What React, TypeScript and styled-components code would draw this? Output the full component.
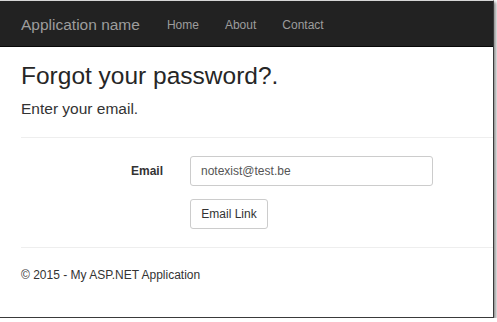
import React from "react";
import styled, { createGlobalStyle } from "styled-components";

const Global = createGlobalStyle`
  html, body { margin: 0; padding: 0; background: #ffffff; }
  body { font-family: "Liberation Sans", Arial, Helvetica, sans-serif; color: #333; }
  * { box-sizing: border-box; }
`;

const Frame = styled.div`
  width: 494px;
  height: 318px;
  background: #fff;
  border-top: 1px solid #d6d6d6;
  border-right: 1px solid #3a3a3a;
  border-bottom: 1px solid #3a3a3a;
  box-shadow: 2px 2px 3px rgba(0, 0, 0, 0.45);
  display: flex;
  flex-direction: column;
  overflow: hidden;
`;

const NavBar = styled.nav`
  height: 46px;
  flex: none;
  background: #222;
  border-bottom: 1px solid #080808;
  display: flex;
  align-items: center;
  padding-left: 21px;
  padding-top: 3px;
`;

const Brand = styled.span`
  font-size: 15.5px;
  color: #9d9d9d;
  margin-right: 27px;
`;

const NavLinks = styled.div`
  display: flex;
  gap: 26px;
`;

const NavLink = styled.span`
  font-size: 12px;
  color: #9d9d9d;
`;

const Container = styled.main`
  padding-left: 21px;
  display: flex;
  flex-direction: column;
`;

const Title = styled.h2`
  margin: 16px 0 0;
  font-size: 24.5px;
  font-weight: 400;
  line-height: 1.1;
  color: #262626;
`;

const SubTitle = styled.h4`
  margin: 10px 0 0;
  font-size: 15.5px;
  font-weight: 400;
  line-height: 1.1;
  color: #333;
`;

const Rule = styled.hr<{ $top: number }>`
  margin: ${(p) => p.$top}px 0 0;
  border: 0;
  border-top: 1px solid #eee;
  height: 0;
`;

const Form = styled.form`
  margin-top: 18px;
  display: grid;
  grid-template-columns: 142px 243px;
  column-gap: 27px;
  row-gap: 13px;
  align-items: center;
`;

const Label = styled.label`
  font-size: 12px;
  font-weight: 700;
  text-align: right;
  color: #333;
`;

const Input = styled.input`
  height: 30px;
  width: 243px;
  padding: 0 10px;
  font-family: inherit;
  font-size: 12px;
  color: #555;
  border: 1px solid #ccc;
  border-radius: 3px;
  background: #fff;
  outline: none;
`;

const Button = styled.button`
  grid-column: 2;
  justify-self: start;
  height: 30px;
  width: 78px;
  padding: 0;
  font-family: inherit;
  font-size: 12px;
  color: #333;
  background: #fff;
  border: 1px solid #ccc;
  border-radius: 3px;
`;

const Footer = styled.footer`
  margin-top: 19px;
  font-size: 12px;
  line-height: 17px;
  color: #333;
`;

export default function App() {
  return (
    <>
      <Global />
      <Frame>
        <NavBar>
          <Brand>Application name</Brand>
          <NavLinks>
            <NavLink>Home</NavLink>
            <NavLink>About</NavLink>
            <NavLink>Contact</NavLink>
          </NavLinks>
        </NavBar>
        <Container>
          <Title>Forgot your password?.</Title>
          <SubTitle>Enter your email.</SubTitle>
          <Rule $top={20} />
          <Form onSubmit={(e) => e.preventDefault()}>
            <Label htmlFor="email">Email</Label>
            <Input id="email" defaultValue="notexist@test.be" />
            <Button type="submit">Email Link</Button>
          </Form>
          <Rule $top={18} />
          <Footer>© 2015 - My ASP.NET Application</Footer>
        </Container>
      </Frame>
    </>
  );
}
